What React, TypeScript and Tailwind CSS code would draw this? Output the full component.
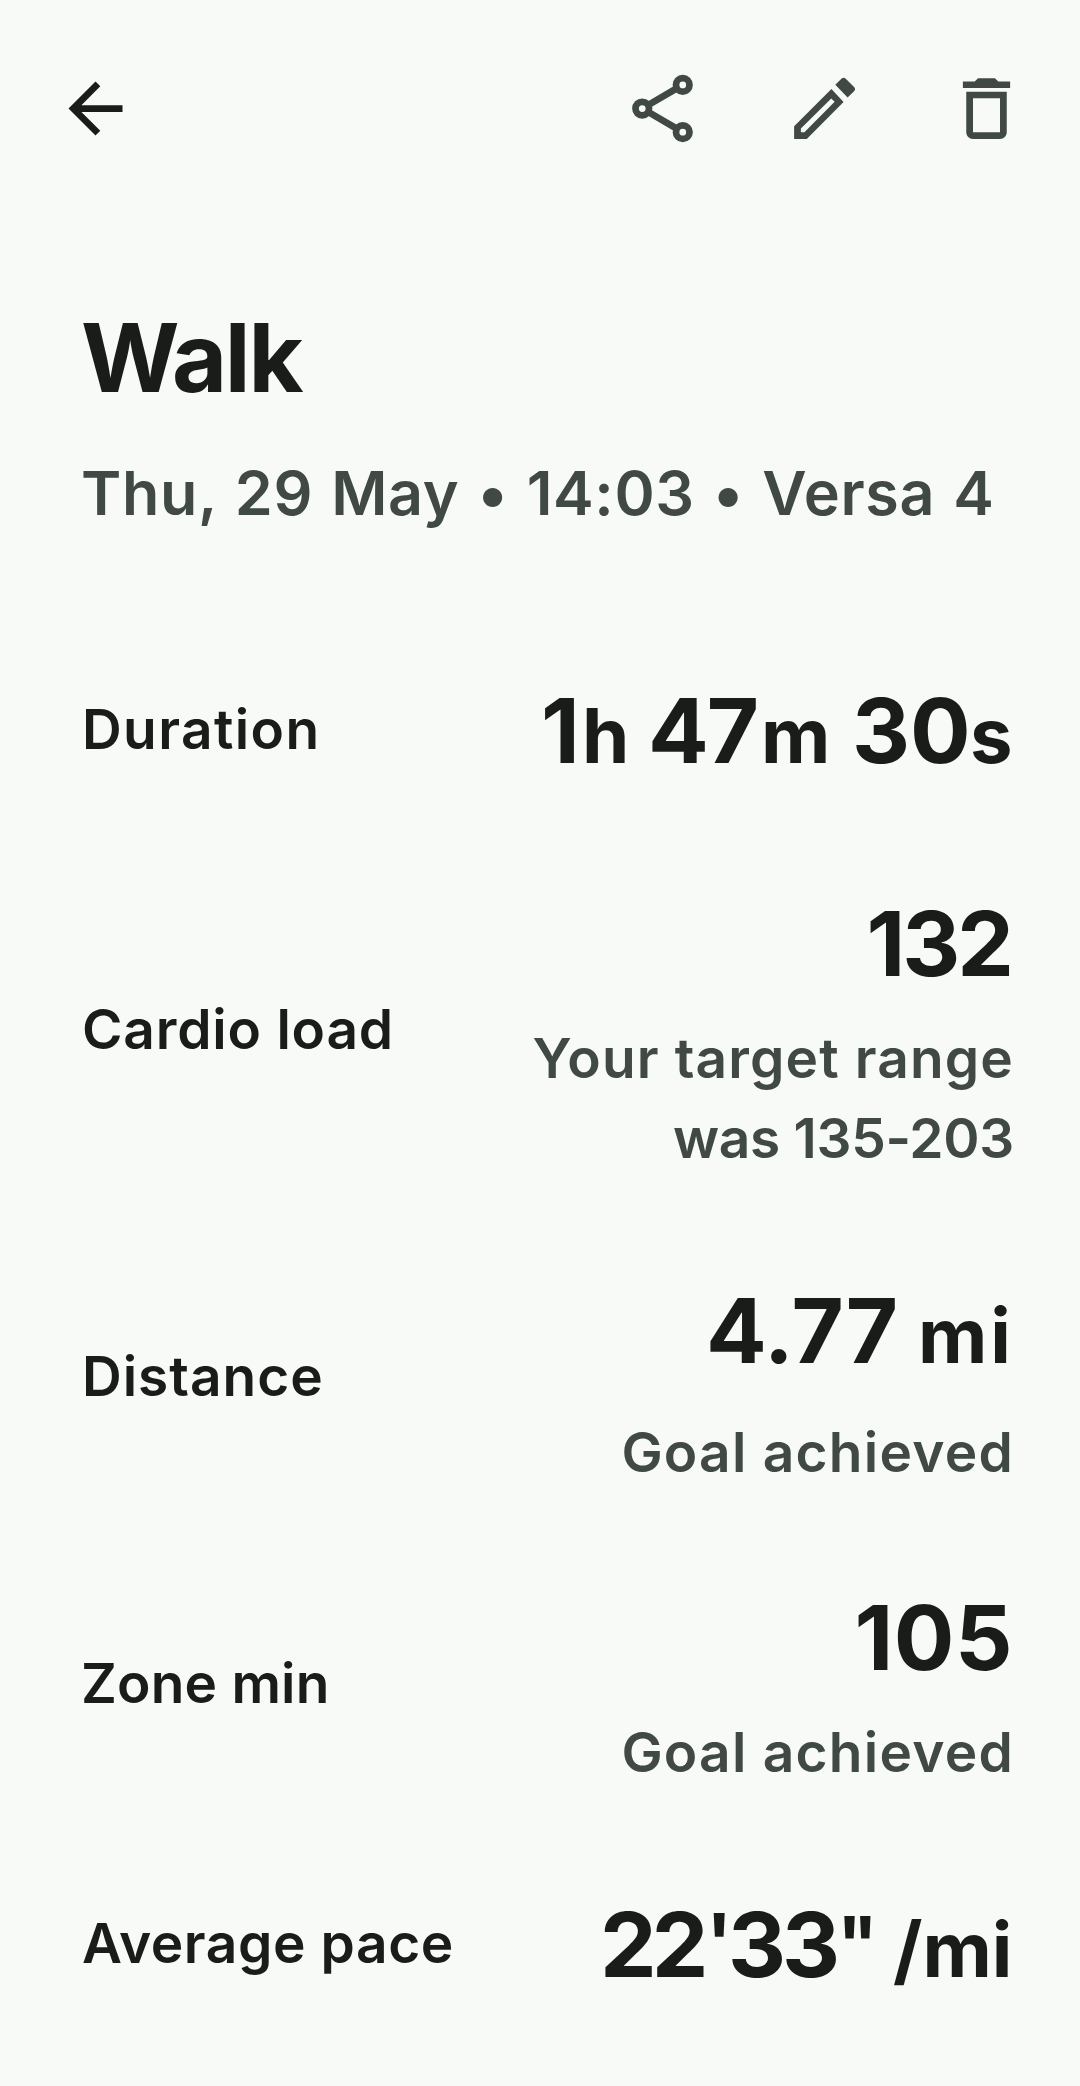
import React from "react";

type IconProps = { children: React.ReactNode; className?: string };

function Icon({ children, className = "" }: IconProps) {
  return (
    <svg viewBox="0 0 24 24" className={`size-[81px] shrink-0 ${className}`} fill="currentColor" aria-hidden="true">
      {children}
    </svg>
  );
}

const ArrowIcon = () => (
  <Icon className="text-[#1a1c1a]">
    <path d="M20 11H7.83l5.59-5.59L12 4l-8 8 8 8 1.41-1.41L7.83 13H20z" />
  </Icon>
);

const ShareIcon = () => (
  <Icon>
    <g fill="none" stroke="currentColor" strokeWidth="2">
      <circle cx="18" cy="5" r="2" />
      <circle cx="6" cy="12" r="2" />
      <circle cx="18" cy="19" r="2" />
      <path d="M7.73 11L16.27 6M7.73 13l8.54 5" />
    </g>
  </Icon>
);

const EditIcon = () => (
  <Icon>
    <path
      fillRule="evenodd"
      d="M3 17.25V21h3.75L17.65 10.1 14.05 6.2zM5 17.95V19h1.05l8.95-9-1-1z"
    />
    <path d="M15.2 4.95l1.8-1.75a.9.9 0 0 1 1.3 0l2.45 2.4a.95.95 0 0 1 0 1.3L18.85 8.75z" />
  </Icon>
);

const DeleteIcon = () => (
  <Icon>
    <path d="M5 4h3.5l1-1h5l1 1H19v1.95H5z" />
    <path fillRule="evenodd" d="M6 7h12v12c0 1.1-.9 2-2 2H8c-1.1 0-2-.9-2-2zm2 1.95V19h8V8.95z" />
  </Icon>
);

type RowProps = { label: string; labelClass: string; className: string; children: React.ReactNode };

function Row({ label, labelClass, className, children }: RowProps) {
  return (
    <section className={`flex items-center justify-between ${className}`}>
      <h2 className={`whitespace-nowrap text-[55px] leading-[80px] ${labelClass}`}>{label}</h2>
      <div className="flex flex-col items-end">{children}</div>
    </section>
  );
}

function Value({ children, className = "" }: { children: React.ReactNode; className?: string }) {
  return (
    <div className={`flex h-[110px] items-baseline whitespace-nowrap text-[90px] font-bold leading-[110px] ${className}`}>
      {children}
    </div>
  );
}

function Unit({ children, className }: { children: React.ReactNode; className: string }) {
  return <span className={`text-[76px] leading-none ${className}`}>{children}</span>;
}

function Note({ children, className }: { children: React.ReactNode; className: string }) {
  return (
    <div className={`-mr-1 whitespace-nowrap text-right text-[55px] leading-[80px] text-[#404944] ${className}`}>
      {children}
    </div>
  );
}

export default function App() {
  return (
    <main className="h-[2086px] w-[1080px] overflow-hidden bg-[#f8faf7] pt-[68px] font-['Inter',sans-serif] font-semibold text-[#1a1c1a]">
      <header className="flex items-center justify-between pl-[55px] pr-[53px]">
        <button aria-label="Back"><ArrowIcon /></button>
        <div className="flex gap-[81px] text-[#404944]">
          <button aria-label="Share"><ShareIcon /></button>
          <button aria-label="Edit"><EditIcon /></button>
          <button aria-label="Delete"><DeleteIcon /></button>
        </div>
      </header>

      <div className="pl-[82px] pr-[70px]">
        <h1 className="-ml-px mt-[154px] text-[95px] font-bold leading-[110px] tracking-[-2.2px]">Walk</h1>
        <p className="-ml-px mt-[40px] whitespace-nowrap text-[61px] leading-[80px] tracking-[0.65px] [word-spacing:2px] text-[#404944]">
          Thu, 29 May • 14:03 • Versa 4
        </p>

        <Row label="Duration" labelClass="pb-[5px] tracking-[1.4px]" className="mt-[143px]">
          <Value>
            <span className="w-[41px]">1</span>
            <Unit className="w-[66px]">h</Unit>
            <span className="w-[113px] tracking-[-2px]">47</span>
            <Unit className="w-[91px]">m</Unit>
            <span className="w-[118px]">30</span>
            <Unit className="w-[40px]">s</Unit>
          </Value>
        </Row>

        <Row label="Cardio load" labelClass="pb-[9px] tracking-[0.8px]" className="mt-[103px]">
          <Value className="-mr-px tracking-[-3px]">132</Value>
          <Note className="mt-[19px] tracking-[1.14px]">Your target range</Note>
          <Note className="tracking-[-0.3px]">was 135-203</Note>
        </Row>

        <Row label="Distance" labelClass="pb-[16px] tracking-[1px]" className="mt-[98px]">
          <Value>
            <span className="w-[212px]">4.77</span>
            <Unit className="w-[92px] tracking-[3px]">mi</Unit>
          </Value>
          <Note className="mt-[26px] tracking-[1.25px]">Goal achieved</Note>
        </Row>

        <Row label="Zone min" labelClass="-ml-px pb-[9px] tracking-[0.2px]" className="mt-[91px]">
          <Value className="-mr-[3px] tracking-[0.5px]">105</Value>
          <Note className="mt-[19px] tracking-[1.25px]">Goal achieved</Note>
        </Row>

        <Row label="Average pace" labelClass="pb-[5px] tracking-[0.6px]" className="mt-[98px]">
          <Value>
            <span className="w-[106px] tracking-[-5px]">22</span>
            <span className="w-[22px] -translate-y-[7px] text-[78px]">'</span>
            <span className="w-[109px] tracking-[-4px]">33</span>
            <span className="w-[56px] -translate-y-[7px] text-[74px]">"</span>
            <Unit className="w-[117px]">/mi</Unit>
          </Value>
        </Row>
      </div>
    </main>
  );
}
